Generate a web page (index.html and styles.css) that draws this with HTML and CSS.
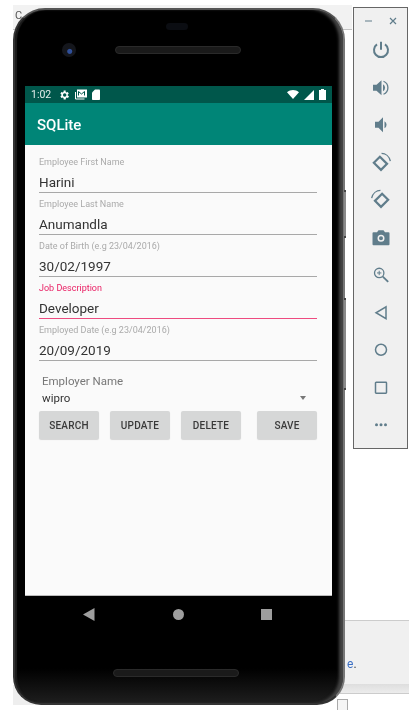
FILE: index.html
```html
<!DOCTYPE html>
<html lang="en">
<head>
    <meta charset="UTF-8">
    <meta name="viewport" content="width=device-width, initial-scale=1.0">
    <title>SQLite - Emulator</title>
    <link rel="stylesheet" href="styles.css">
</head>
<body>
    <div class="desktop">
        <!-- Bits of the IDE window behind the emulator -->
        <div class="ide-top"></div>
        <span class="ide-letter">C</span>
        <div class="ide-bottom"><span class="ide-link">e</span>.</div>
        <div class="ide-footer"></div>
        <div class="ide-box"></div>
        <div class="ide-corner"></div>

        <!-- Phone -->
        <div class="phone">
            <div class="earpiece"></div>
            <div class="camera"></div>
            <div class="speaker speaker-top"></div>
            <div class="side-key volume-key"></div>
            <div class="side-key power-key"></div>

            <div class="screen">
                <div class="status-bar">
                    <span class="clock">1:02</span>
                    <svg class="status-icon" width="12" height="12" viewBox="0 0 24 24"><path fill="#fff" d="M19.400 13a7.500 7.500 0 0 0 0-2l2.100-1.600-2-3.500-2.500 1a7.500 7.500 0 0 0-1.700-1L15.400 3.200h-4l-.4 2.700a7.500 7.500 0 0 0-1.700 1l-2.500-1-2 3.500L6.900 11a7.500 7.500 0 0 0 0 2l-2.100 1.600 2 3.500 2.500-1a7.500 7.500 0 0 0 1.700 1l.4 2.700h4l.4-2.700a7.500 7.500 0 0 0 1.700-1l2.500 1 2-3.500zM13.400 15.500a3.500 3.500 0 1 1 0-7 3.500 3.500 0 0 1 0 7z"/></svg>
                    <svg class="status-icon" width="12" height="11" viewBox="0 0 12 11"><path fill="none" stroke="#fff" d="M.5 3v7h9"/><path fill="#fff" d="M2 .5h10v8H2z"/><path fill="none" stroke="#00574b" d="M3.500 6.500V2.500l3 2.500 3-2.500v4"/></svg>
                    <svg class="status-icon" width="8" height="11" viewBox="0 0 8 11"><path fill="#fff" d="M3 .5h4.200a.8.800 0 0 1 .8.800v8.900a.8.800 0 0 1-.8.800H.8a.8.800 0 0 1-.8-.8V3.500z"/></svg>
                    <span class="status-spacer"></span>
                    <svg width="12" height="9" viewBox="0 0 12 9"><path fill="#fff" d="M0 2.200C3.500-.7 8.500-.7 12 2.200L6 9z"/></svg>
                    <svg width="10" height="10" viewBox="0 0 10 10"><path fill="#fff" d="M10 0v10H0z"/></svg>
                    <svg width="7" height="11" viewBox="0 0 7 11"><path fill="#fff" d="M2 0h3v1h2v10H0V1h2z"/></svg>
                </div>
                <div class="toolbar">SQLite</div>

                <div class="content">
                    <div class="field">
                        <label class="field-label">Employee First Name</label>
                        <div class="field-value">Harini</div>
                    </div>
                    <div class="field">
                        <label class="field-label">Employee Last Name</label>
                        <div class="field-value">Anumandla</div>
                    </div>
                    <div class="field">
                        <label class="field-label">Date of Birth (e.g 23/04/2016)</label>
                        <div class="field-value">30/02/1997</div>
                    </div>
                    <div class="field field-active">
                        <label class="field-label">Job Description</label>
                        <div class="field-value">Developer</div>
                    </div>
                    <div class="field">
                        <label class="field-label">Employed Date (e.g 23/04/2016)</label>
                        <div class="field-value">20/09/2019</div>
                    </div>

                    <div class="employer">
                        <div class="employer-label">Employer Name</div>
                        <div class="spinner">
                            <span>wipro</span>
                            <span class="spinner-arrow"></span>
                        </div>
                    </div>

                    <div class="buttons">
                        <button class="btn">SEARCH</button>
                        <button class="btn">UPDATE</button>
                        <button class="btn">DELETE</button>
                        <button class="btn btn-save">SAVE</button>
                    </div>
                </div>
            </div>

            <div class="nav-bar">
                <svg width="12" height="13" viewBox="0 0 12 13"><path fill="#9e9e9e" d="M11.500 0v13L0 6.500z"/></svg>
                <span class="nav-dot"></span>
                <span class="nav-square"></span>
            </div>
            <div class="speaker speaker-bottom"></div>
        </div>

        <!-- Emulator side toolbar -->
        <div class="side-panel">
            <div class="window-btns">
                <svg width="8" height="8" viewBox="0 0 8 8"><path stroke="#78909c" stroke-width="1.200" d="M0 4h7"/></svg>
                <svg width="8" height="8" viewBox="0 0 8 8"><path stroke="#607d8b" stroke-width="1.200" d="M1 1l6 6M7 1L1 7"/></svg>
            </div>
            <svg class="tool" width="18" height="18" viewBox="0 0 18 18"><path fill="none" stroke="#607d8b" stroke-width="2" d="M9 1v8"/><path fill="none" stroke="#607d8b" stroke-width="2" d="M5 3.600a7 7 0 1 0 8 0"/></svg>
            <svg class="tool" width="18" height="18" viewBox="0 0 18 18"><path fill="#607d8b" d="M1 6h3.500L9.500 1.500v15L4.500 12H1z"/><path fill="#607d8b" d="M11 5.500a4 4 0 0 1 0 7z"/><path fill="none" stroke="#607d8b" stroke-width="1.300" d="M11.500 2.500a7 7 0 0 1 0 13"/></svg>
            <svg class="tool" width="18" height="18" viewBox="0 0 18 18"><path fill="#607d8b" d="M3 6h3.500L11 1.500v15L6.500 12H3z"/><path fill="#607d8b" d="M12.500 5.500a4 4 0 0 1 0 7z"/></svg>
            <svg class="tool" width="22" height="22" viewBox="0 0 20 20"><path fill="none" stroke="#607d8b" stroke-width="2" d="M9 4.500l6.500 6.500-5.500 5.500L3.500 10z"/><path fill="none" stroke="#607d8b" stroke-width="1.200" d="M10.500 1.500c3.500 0 7 2.500 8 7"/></svg>
            <svg class="tool" width="22" height="22" viewBox="0 0 20 20"><path fill="none" stroke="#607d8b" stroke-width="2" d="M11 4.500L4.500 11l5.500 5.500 6.500-6.500z"/><path fill="none" stroke="#607d8b" stroke-width="1.200" d="M9.500 1.500c-3.500 0-7 2.500-8 7"/></svg>
            <svg class="tool" width="18" height="18" viewBox="0 0 18 18"><path fill="#607d8b" fill-rule="evenodd" d="M1.500 3.500H5L6.500 1.500h5L13 3.500h3.500A1 1 0 0 1 17.500 4.500v11a1 1 0 0 1-1 1h-15a1 1 0 0 1-1-1v-11a1 1 0 0 1 1-1zM9 6a3.500 3.500 0 1 0 0 7 3.500 3.500 0 0 0 0-7zM9 7.500a2 2 0 1 1 0 4 2 2 0 0 1 0-4z"/></svg>
            <svg class="tool" width="16" height="16" viewBox="0 0 16 16"><circle cx="6.200" cy="6.200" r="4.700" fill="none" stroke="#607d8b" stroke-width="1.300"/><path stroke="#607d8b" stroke-width="1.800" d="M9.800 9.800l5.400 5.400"/><path stroke="#607d8b" d="M6.200 4v4.400M4 6.200h4.400"/></svg>
            <svg class="tool" width="14" height="16" viewBox="0 0 14 16"><path fill="none" stroke="#607d8b" stroke-width="1.500" d="M12 2v12L2 8z"/></svg>
            <svg class="tool" width="14" height="14" viewBox="0 0 14 14"><circle cx="7" cy="7" r="5.500" fill="none" stroke="#607d8b" stroke-width="1.500"/></svg>
            <svg class="tool" width="14" height="14" viewBox="0 0 14 14"><rect x="1.500" y="1.500" width="11" height="11" rx=".7" fill="none" stroke="#607d8b" stroke-width="1.500"/></svg>
            <svg class="tool" width="14" height="14" viewBox="0 0 14 14"><circle cx="2.500" cy="7" r="1.500" fill="#607d8b"/><circle cx="7" cy="7" r="1.500" fill="#607d8b"/><circle cx="11.500" cy="7" r="1.500" fill="#607d8b"/></svg>
        </div>
    </div>
</body>
</html>
```
FILE: styles.css
```css
* {
    box-sizing: border-box;
}

body {
    margin: 0;
    overflow: hidden;
    background: #fff;
    font-family: Roboto, sans-serif;
}

.desktop {
    position: relative;
    width: 411px;
    height: 710px;
    overflow: hidden;
    filter: blur(0.3px); /* the reference is a scaled-down capture */
}

/* IDE leftovers behind the phone */
.ide-top {
    position: absolute;
    left: 13px;
    top: 5px;
    width: 339px;
    height: 25px;
    background: #f2f2f2;
    border-bottom: 1px solid #c4c4c4;
}

.ide-letter {
    position: absolute;
    left: 15px;
    top: 9px;
    font-size: 11px;
    color: #555;
}

.ide-bottom {
    position: absolute;
    left: 340px;
    top: 620px;
    width: 69px;
    height: 64px;
    padding: 36px 0 0 7px;
    background: #f0f0f0;
    border-top: 1px solid #ccc;
    font-size: 12px;
    color: #444;
}

.ide-link {
    color: #3b6fc4;
}

.ide-footer {
    position: absolute;
    left: 340px;
    top: 684px;
    width: 69px;
    height: 10px;
    background: linear-gradient(#dedede, #ececec);
    border-bottom: 1px solid #ccc;
}

.ide-box {
    position: absolute;
    left: 337px;
    top: 699px;
    width: 11px;
    height: 12px;
    border: 1px solid #aaa;
    background: #f5f5f5;
}

.ide-corner {
    position: absolute;
    left: 13px;
    top: 685px;
    width: 30px;
    height: 20px;
    background: #eee;
}

/* Phone body */
.phone {
    position: absolute;
    left: 13px;
    top: 8px;
    width: 332px;
    height: 697px;
    padding: 76px 0 0 10px;
    background: linear-gradient(#000 95%, #1e1e1e);
    border: 2px solid #333;
    border-top-color: #555;
    border-right-color: #777;
    border-radius: 32px 32px 28px 28px;
    box-shadow: inset -5px 0 3px -1px #444, inset 2px 0 1px #1c1c1c;
}

.earpiece {
    position: absolute;
    left: 151px;
    top: 13px;
    width: 22px;
    height: 7px;
    border-radius: 4px;
    background: #0b0d12;
}

.camera {
    position: absolute;
    left: 47px;
    top: 33px;
    width: 14px;
    height: 14px;
    border-radius: 50%;
    background: radial-gradient(circle at 55% 60%, #2f4f9a 0 2px, #14161c 3px);
}

.speaker {
    position: absolute;
    left: 100px;
    width: 126px;
    height: 8px;
    border-radius: 4px;
    background: #1a1a1a;
    border: 1px solid #2a2a2a;
}

.speaker-top {
    top: 36px;
}

.speaker-bottom {
    top: 659px;
    left: 98px;
}

.side-key {
    position: absolute;
    right: -3px;
    width: 2px;
    background: #8a8a8a;
    border-top: 2px solid #444;
    border-bottom: 2px solid #444;
}

.volume-key {
    top: 180px;
    height: 48px;
}

.power-key {
    top: 288px;
    height: 92px;
}

.screen {
    width: 307px;
    height: 510px;
    display: flex;
    flex-direction: column;
}

.status-bar {
    flex: none;
    height: 17px;
    display: flex;
    align-items: center;
    gap: 5px;
    padding: 0 6px;
    background: #00574b;
    color: #e4efec;
    font-size: 10.500px;
}

.status-bar .clock {
    margin-right: 2px;
}

.status-spacer {
    flex: 1;
}

.toolbar {
    flex: none;
    height: 42px;
    display: flex;
    align-items: center;
    padding: 2px 0 0 12px;
    background: #008577;
    color: #fff;
    font-size: 15px;
    font-weight: 500;
}

.content {
    flex: 1;
    padding: 6px 15px 0 14px;
    background: #fafafa;
    border-bottom: 1px solid #bbb;
}

.field {
    height: 42px;
    border-bottom: 1.500px solid #a8a8a8;
}

.field-label {
    display: block;
    height: 18px;
    padding-top: 6px;
    font-size: 9px;
    line-height: 10px;
    color: #aaa;
}

.field-value {
    padding-top: 5.500px;
    font-size: 13.500px;
    line-height: 15px;
    color: #333;
}

.field-active {
    border-bottom-color: #ee4b80;
}

.field-active .field-label {
    color: #e91e63;
}

.employer {
    margin: 13px 0 0 3px;
}

.employer-label {
    font-size: 11.500px;
    color: #777;
    line-height: 14px;
}

.spinner {
    display: flex;
    justify-content: space-between;
    align-items: center;
    height: 18px;
    padding: 2px 11px 0 0;
    font-size: 11.500px;
    color: #333;
}

.spinner-arrow {
    width: 0;
    height: 0;
    border: 3.500px solid transparent;
    border-top: 4px solid #777;
    border-bottom: 0;
}

.buttons {
    display: flex;
    gap: 11px;
    margin-top: 5px;
}

.btn {
    width: 60px;
    height: 28px;
    padding: 0;
    border: none;
    border-radius: 2px;
    background: #d6d7d7;
    box-shadow: 0 1px 1px rgba(0, 0, 0, 0.15);
    color: #3a3a3a;
    font-family: inherit;
    font-size: 10px;
    font-weight: 500;
    letter-spacing: 0.2px;
}

.btn-save {
    margin-left: 5px;
}

.nav-bar {
    display: flex;
    align-items: center;
    height: 36px;
    padding-left: 58px;
}

.nav-dot {
    width: 11px;
    height: 11px;
    margin-left: 78px;
    border-radius: 50%;
    background: #9e9e9e;
}

.nav-square {
    width: 11px;
    height: 11px;
    margin-left: 77px;
    background: #9e9e9e;
}

/* Side toolbar */
.side-panel {
    position: absolute;
    left: 353px;
    top: 7px;
    width: 55px;
    height: 442px;
    display: flex;
    flex-direction: column;
    align-items: center;
    background: #f0f0f0;
    border: 1px solid #666;
}

.window-btns {
    display: flex;
    justify-content: center;
    gap: 16px;
    padding-top: 9px;
    height: 23.250px;
    width: 100%;
    flex: none;
}

.tool {
    flex: none;
    height: 37.500px;
}
```
